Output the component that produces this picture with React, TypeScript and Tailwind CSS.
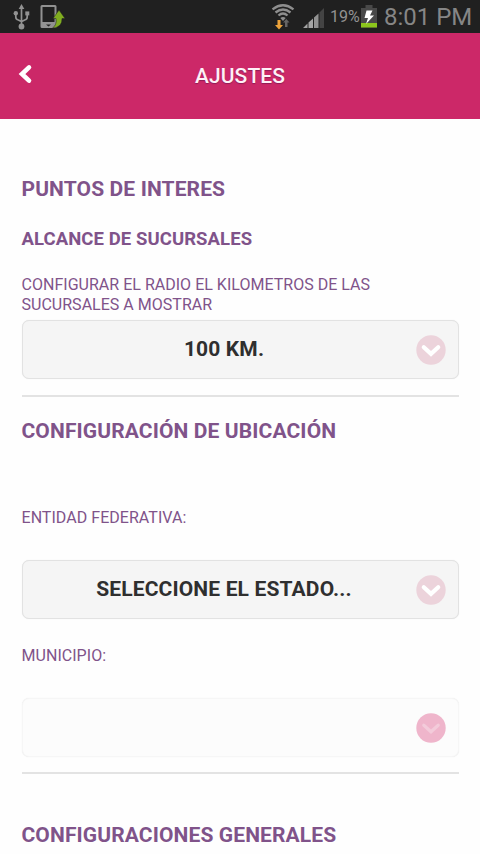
// ---------------------------------------------------------------------------
// Settings screen: store range and location preferences
// ---------------------------------------------------------------------------

export default function App() {
  return (
    <div className="h-[854px] w-[480px] overflow-hidden bg-[#fefefe] font-['Roboto','Liberation_Sans',sans-serif]">
      <StatusBar />
      <Header title="AJUSTES" />

      <main className="px-[21.5px] pt-[57px]">
        <section className="border-b-2 border-[#e3e3e3] pb-4">
          <SectionTitle>PUNTOS DE INTERES</SectionTitle>
          <h3 className="mt-[25px] text-[18.5px] leading-6 font-bold tracking-[0.08px] text-[#80538a]">
            ALCANCE DE SUCURSALES
          </h3>
          <p className="mt-[24px] mb-[5px] text-[16px] leading-5 tracking-[0.02px] text-[#80538a]">
            CONFIGURAR EL RADIO EL KILOMETROS DE LAS
            <br />
            SUCURSALES A MOSTRAR
          </p>
          <SelectField value="100 KM." />
        </section>

        <section className="border-b-2 border-[#e3e3e3] pt-[21px] pb-[15px]">
          <SectionTitle>CONFIGURACIÓN DE UBICACIÓN</SectionTitle>
          <FieldLabel className="mt-[64px]">ENTIDAD FEDERATIVA:</FieldLabel>
          <SelectField value="SELECCIONE EL ESTADO..." />
          <FieldLabel className="mt-[27px]">MUNICIPIO:</FieldLabel>
          <SelectField value="" disabled />
        </section>

        <section className="pt-12">
          <SectionTitle>CONFIGURACIONES GENERALES</SectionTitle>
        </section>
      </main>
    </div>
  );
}

// ---------------------------------------------------------------------------
// Text and form pieces
// ---------------------------------------------------------------------------

function SectionTitle({ children }: { children: string }) {
  return (
    <h2 className="text-[21px] leading-[26px] font-bold tracking-[0.12px] whitespace-nowrap text-[#80538a]">
      {children}
    </h2>
  );
}

function FieldLabel({ children, className }: { children: string; className: string }) {
  return (
    <p className={`mb-8 text-[16px] leading-5 tracking-[0.04px] text-[#80538a] ${className}`}>{children}</p>
  );
}

interface SelectFieldProps {
  value: string;
  disabled?: boolean;
}

function SelectField({ value, disabled = false }: SelectFieldProps) {
  return (
    <button
      type="button"
      disabled={disabled}
      className={[
        'flex h-[59px] w-full items-center rounded-[7px] border-[1.5px] pr-[12px] pl-[10px]',
        'shadow-[0_0_1px_#e4e4e4]',
        disabled ? 'border-[#f6f6f6] bg-[#fcfcfc]' : 'border-[#e2e2e2] bg-[#f5f5f5]',
      ].join(' ')}
    >
      <span className="flex-1 pb-[2px] text-center text-[21px] leading-6 font-bold tracking-[0.15px] text-[#2f2f2f]">
        {value}
      </span>
      <svg className="h-[30px] w-[30px] shrink-0" viewBox="0 0 30 30" fill="none">
        <circle cx="15" cy="15" r="14.7" fill={disabled ? '#efb5cb' : '#ecd3db'} />
        <path
          d="M7.800 12.200 15 18.800l7.200-6.600"
          stroke={disabled ? '#f3cbda' : '#fff'}
          strokeWidth={disabled ? 3.2 : 4.2}
          strokeLinecap="round"
        />
      </svg>
    </button>
  );
}

// ---------------------------------------------------------------------------
// Header
// ---------------------------------------------------------------------------

function Header({ title }: { title: string }) {
  return (
    <header className="grid h-[86px] grid-cols-[60px_1fr_60px] items-center bg-[#cc2868]">
      <button type="button" aria-label="Volver" className="pl-[18px]">
        <svg className="mb-[5px] h-5 w-4" viewBox="0 0 16 20" fill="none">
          <path d="M11 3.400 4 10l7 6.600" stroke="#fff" strokeWidth="4.600" strokeLinecap="round" />
        </svg>
      </button>
      <h1 className="text-center text-[21px] leading-6 font-medium tracking-[0.1px] text-[#fff0f7] [text-shadow:0_1px_1px_#8f1c55]">
        {title}
      </h1>
    </header>
  );
}

// ---------------------------------------------------------------------------
// Android status bar
// ---------------------------------------------------------------------------

function StatusBar() {
  return (
    <div className="flex h-[33px] items-center bg-[#202020] pr-[8px] pl-[13px]">
      <UsbIcon />
      <TransferIcon />
      <div className="ml-auto flex items-center">
        <WifiIcon />
        <SignalIcon />
        <span className="ml-[5px] w-[30px] text-[16px] leading-5 whitespace-nowrap text-[#929292]">19%</span>
        <BatteryIcon />
        <span className="ml-[7px] w-[88px] text-[24px] leading-7 whitespace-nowrap text-[#868686]">8:01 PM</span>
      </div>
    </div>
  );
}

function UsbIcon() {
  return (
    <svg className="h-[27px] w-[17px]" viewBox="0 0 17 27" fill="#929292">
      <path d="M8.5 1 11.3 6H5.7z" />
      <circle cx="8.5" cy="23.5" r="2.9" />
      <circle cx="2.8" cy="10.3" r="2.2" />
      <path d="M12.3 8.4h4v4h-4z" />
      <path d="M8.5 4v19M2.8 11v3q0 2.5 2.5 3l3.2 1.5 3.2-1.5q2.5-.5 2.5-3v-3" fill="none" stroke="#929292" strokeWidth="1.7" />
    </svg>
  );
}

function TransferIcon() {
  return (
    <svg className="ml-[10px] h-[26px] w-[26px]" viewBox="0 0 26 26">
      <path fill="#929292" fillRule="evenodd" d="M2 1h13q1.500 0 1.500 1.500v20q0 1.500-1.500 1.500H2Q.5 24 .5 22.500v-20Q.5 1 2 1zM2.500 3v15h12V3zM6 20.500l2.500 2 2.500-2z" />
      <path fill="#80ad20" stroke="#202020" strokeWidth=".5" d="M19 6 25 14.500h-3q.5 9-9.500 9.500 4.500-3 3.500-9.500h-3z" />
    </svg>
  );
}

function WifiIcon() {
  return (
    <svg className="h-[27px] w-[24px]" viewBox="0 0 24 27" fill="none">
      <path d="M1.500 6.300Q12-1.700 22.500 6.300M4.500 9.500Q12 3.500 19.500 9.500M7.500 12.500Q12 8.500 16.500 12.500" stroke="#8e8e8e" strokeWidth="2.300" />
      <path d="M9.300 15Q12 13 14.700 15L12 18z" fill="#8e8e8e" />
      <path d="M6.500 17h3v5h2.500L8 26.500 4 22h2.500z" fill="#eda33a" />
      <path d="M14 24h2.500v-4.500h2L15.300 16l-3.300 3.500h2z" fill="#656565" />
    </svg>
  );
}

function SignalIcon() {
  return (
    <svg className="ml-[8px] h-[24px] w-[22px]" viewBox="0 0 22 24">
      <path d="M0 23h4.500v-4.500zM5.500 23h4.500v-9.500l-4.500 4z" fill="#a4a4a4" />
      <path d="M11 23h4.500V8.500L11 12.500z" fill="#929292" />
      <path d="M16.500 23H21V3l-4.500 4.500z" fill="#444" />
    </svg>
  );
}

function BatteryIcon() {
  return (
    <svg className="ml-[1px] h-[25px] w-[16px]" viewBox="0 0 16 25">
      <path d="M4.500 1h7v3H16v19.500H0V4h4.500z" fill="#494949" />
      <path d="M0 19h16v4.500H0z" fill="#8cc61c" />
      <path d="M5.500 6.500h6L9 11.500h4L5 20l2-6H3.500z" fill="#fff" />
    </svg>
  );
}
